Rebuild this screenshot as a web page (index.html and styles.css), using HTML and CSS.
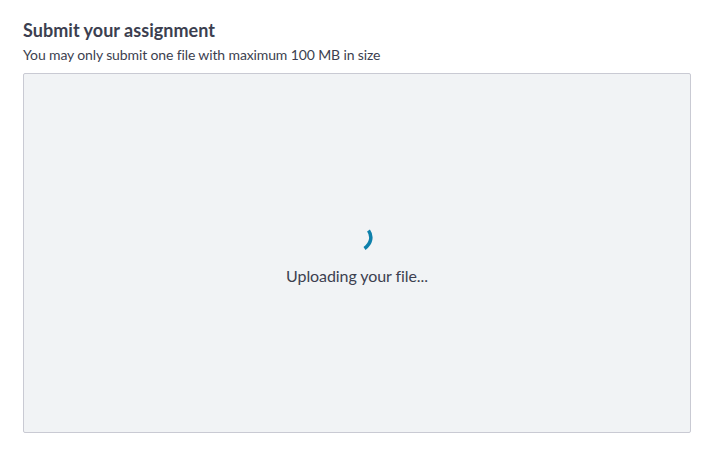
FILE: index.html
```html
<!DOCTYPE html>
<html lang="en">
<head>
    <meta charset="UTF-8">
    <meta name="viewport" content="width=device-width, initial-scale=1.0">
    <title>Submit your assignment</title>
    <link rel="stylesheet" href="styles.css">
</head>
<body>
    <div class="container">
        <h1>Submit your assignment</h1>
        <p class="hint">You may only submit one file with maximum 100 MB in size</p>
        <div class="dropzone">
            <svg class="spinner" width="32" height="32" viewBox="0 0 32 32">
                <path d="M27.5 10.5C31.5 16 30.5 23.5 23.5 28.5" fill="none" stroke="#0e80ab" stroke-width="3.5"/>
            </svg>
            <div class="status">Uploading your file...</div>
        </div>
    </div>
</body>
</html>
```

FILE: styles.css
```css
body {
    font-family: Lato, 'Open Sans', sans-serif;
    background: #fff;
    margin: 0;
    color: #3c3f50;
}
.container {
    padding: 19px 17px 20px 23px;
}
h1 {
    margin: 0;
    font-size: 18px;
    line-height: 22px;
    font-weight: 700;
    letter-spacing: 0.03px;
}
.hint {
    margin: 5px 0 0;
    font-size: 14px;
    line-height: 18px;
    letter-spacing: -0.125px;
}
.dropzone {
    margin-top: 9px;
    height: 360px;
    box-sizing: border-box;
    background: #f1f3f5;
    border: 1px solid #c9cad3;
    border-radius: 2px;
    display: flex;
    flex-direction: column;
    align-items: center;
    justify-content: center;
}
.status {
    margin-top: 14px;
    font-size: 16px;
    line-height: 20px;
    letter-spacing: -0.08px;
}
```
